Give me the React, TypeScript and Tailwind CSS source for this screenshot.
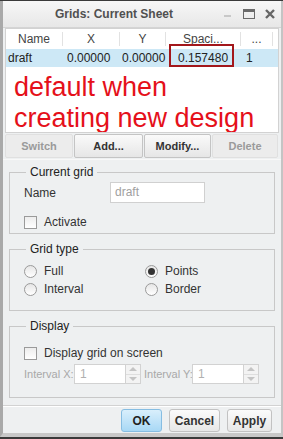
import { useState } from "react";

function Radio({ checked, label }: { checked?: boolean; label: string }) {
  return (
    <div className="flex items-center gap-[7px] h-[18px]">
      <span className="w-[13px] h-[13px] rounded-full border border-[#9a9a9a] bg-gradient-to-b from-[#e6e6e6] to-white flex items-center justify-center">
        {checked && <span className="w-[7px] h-[7px] rounded-full bg-[#333]" />}
      </span>
      <span>{label}</span>
    </div>
  );
}

function Check({ label }: { label: string }) {
  return (
    <div className="flex items-center gap-[7px] h-[14px]">
      <span className="w-[13px] h-[13px] border border-[#9a9a9a] bg-gradient-to-b from-[#ededed] to-white" />
      <span>{label}</span>
    </div>
  );
}

function Spin() {
  return (
    <div className="flex shrink-0">
      <div className="w-[52px] h-[20px] bg-white border border-[#d2d2d2] pl-[5px] leading-[18px] text-[#b0b0b0] text-[12px]">
        1
      </div>
      <div className="w-[15px] h-[20px] border border-l-0 border-[#d2d2d2] bg-[#f3f3f3] flex flex-col">
        <div className="flex-1 flex items-center justify-center border-b border-[#dedede]">
          <span className="w-0 h-0 border-x-[4px] border-x-transparent border-b-[4px] border-b-[#c4c4c4]" />
        </div>
        <div className="flex-1 flex items-center justify-center">
          <span className="w-0 h-0 border-x-[4px] border-x-transparent border-t-[4px] border-t-[#c4c4c4]" />
        </div>
      </div>
    </div>
  );
}

function ToolBtn({ label, w, disabled }: { label: string; w: string; disabled?: boolean }) {
  return (
    <div
      className={`${w} h-[24px] flex items-center justify-center rounded-[2px] border text-[11px] font-bold ${
        disabled
          ? "border-[#e0e0e0] bg-[#ececec] text-[#9a9a9a]"
          : "border-[#c4c4c4] bg-gradient-to-b from-[#fafafa] to-[#e6e6e6] text-[#333]"
      }`}
    >
      {label}
    </div>
  );
}

export default function App() {
  const [row] = useState({ name: "draft", x: "0.00000", y: "0.00000", spacing: "0.157480", n: "1" });

  return (
    <div
      className="w-[283px] h-[439px] bg-[#3a3a3a] pt-px pb-[2px] text-[12px] leading-[14px] text-[#333]"
      style={{ fontFamily: '"Liberation Sans", Arial, sans-serif' }}
    >
      <div className="h-full border-l-[3px] border-r-[2px] border-b-[4px] border-l-[#a9a9a9] border-r-[#c4c4c4] border-b-[#c8c8c8] bg-[#eef0f1] flex flex-col overflow-hidden">
        {/* title bar */}
        <div className="shrink-0 h-[27px] flex items-center bg-gradient-to-b from-[#f7f7f7] to-[#e7e7e7] border-b border-[#d4d4d4]">
          <span className="pl-[52px] font-bold text-[#505050] text-[12px]">Grids: Current Sheet</span>
          <div className="ml-auto flex items-center pr-[6px]">
            <span className="w-[7px] h-[2px] bg-[#c8c8c8] mr-[12px] mt-[4px]" />
            <span className="w-[12px] h-[10px] border border-t-[3px] border-[#6a6a6a] mr-[10px]" />
            <svg width="10" height="10" viewBox="0 0 10 10">
              <path d="M1 1 L9 9 M9 1 L1 9" stroke="#666" strokeWidth="2.4" />
            </svg>
          </div>
        </div>

        {/* table */}
        <div className="shrink-0 mx-[2px] h-[105px] bg-white border border-[#d2d2d2] relative overflow-hidden">
          <div className="flex h-[20px] items-end pb-[3px] text-[#444]">
            <div className="w-[57px] text-center border-r border-[#e2e2e2]">Name</div>
            <div className="w-[57px] text-center border-r border-[#e2e2e2]">X</div>
            <div className="w-[46px] text-center border-r border-[#e2e2e2]">Y</div>
            <div className="w-[75px] text-center border-r border-[#e2e2e2]">Spaci...</div>
            <div className="w-[32px] text-center border-r border-[#e2e2e2]">...</div>
          </div>
          <div className="flex h-[18px] items-center bg-[#cde8f6] text-[#222]">
            <div className="w-[57px] pl-[2px]">{row.name}</div>
            <div className="w-[57px] pl-[4px]">{row.x}</div>
            <div className="w-[46px] pl-[2px]">{row.y}</div>
            <div className="w-[75px] pl-[12px]">{row.spacing}</div>
            <div className="w-[32px] pl-[5px]">{row.n}</div>
          </div>
          <div className="absolute left-[163px] top-[15px] w-[65px] h-[23px] border-2 border-[#a3171b]" />
          <div className="pl-[8px] mt-[5px] text-[27px] leading-[31px] text-[#e5101a]">
            default when
            <br />
            creating new design
          </div>
        </div>

        {/* toolbar */}
        <div className="shrink-0 flex mx-[2px] mt-px gap-px">
          <ToolBtn label="Switch" w="w-[68px]" disabled />
          <ToolBtn label="Add..." w="w-[69px]" />
          <ToolBtn label="Modify..." w="w-[67px]" />
          <ToolBtn label="Delete" w="w-[66px]" disabled />
        </div>
        <div className="shrink-0 mt-px border-t border-[#f8f8f8]" />

        {/* current grid */}
        <fieldset className="shrink-0 mx-[6px] mt-[5px] border border-[#c8c8c8] px-[14px] pb-[4px]">
          <legend className="px-[4px] ml-[2px] text-[#222]">Current grid</legend>
          <div className="flex items-center mt-[3px]">
            <span className="w-[86px]">Name</span>
            <div className="w-[95px] h-[21px] bg-white border border-[#d0d0d0] pl-[4px] leading-[19px] text-[#a0a0a0]">
              draft
            </div>
          </div>
          <div className="mt-[12px]">
            <Check label="Activate" />
          </div>
        </fieldset>

        {/* grid type */}
        <fieldset className="shrink-0 mx-[6px] mt-[8px] border border-[#c8c8c8] px-[14px] pb-[12px]">
          <legend className="px-[4px] ml-[2px] text-[#222]">Grid type</legend>
          <div className="grid grid-cols-[121px_1fr] mt-[6px]">
            <Radio label="Full" />
            <Radio label="Points" checked />
            <Radio label="Interval" />
            <Radio label="Border" />
          </div>
        </fieldset>

        {/* display */}
        <fieldset className="shrink-0 mx-[6px] mt-[8px] border border-[#c8c8c8] px-[14px] pb-[13px]">
          <legend className="px-[4px] ml-[2px] text-[#222]">Display</legend>
          <div className="mt-[13px]">
            <Check label="Display grid on screen" />
          </div>
          <div className="flex items-center mt-[4px] text-[11px] text-[#a8a8a8] whitespace-nowrap">
            <span className="w-[50px]">Interval X:</span>
            <Spin />
            <span className="w-[51px] pl-[3px]">Interval Y:</span>
            <Spin />
          </div>
        </fieldset>

        {/* footer */}
        <div className="shrink-0 mt-[7px] border-t border-[#d2d2d2] border-b border-b-white" />
        <div className="shrink-0 flex justify-end gap-[7px] pr-[9px] mt-[2px]">
          <div className="w-[41px] h-[23px] rounded-[3px] border border-[#86bde2] bg-gradient-to-b from-[#d9effc] to-[#a8d8f5] flex items-center justify-center font-bold text-[#222]">
            OK
          </div>
          <div className="w-[51px] h-[23px] rounded-[3px] border border-[#c2c2c2] bg-gradient-to-b from-[#fbfbfb] to-[#e7e7e7] flex items-center justify-center font-bold text-[#333]">
            Cancel
          </div>
          <div className="w-[45px] h-[23px] rounded-[3px] border border-[#c2c2c2] bg-gradient-to-b from-[#fbfbfb] to-[#e7e7e7] flex items-center justify-center font-bold text-[#333]">
            Apply
          </div>
        </div>
      </div>
    </div>
  );
}
